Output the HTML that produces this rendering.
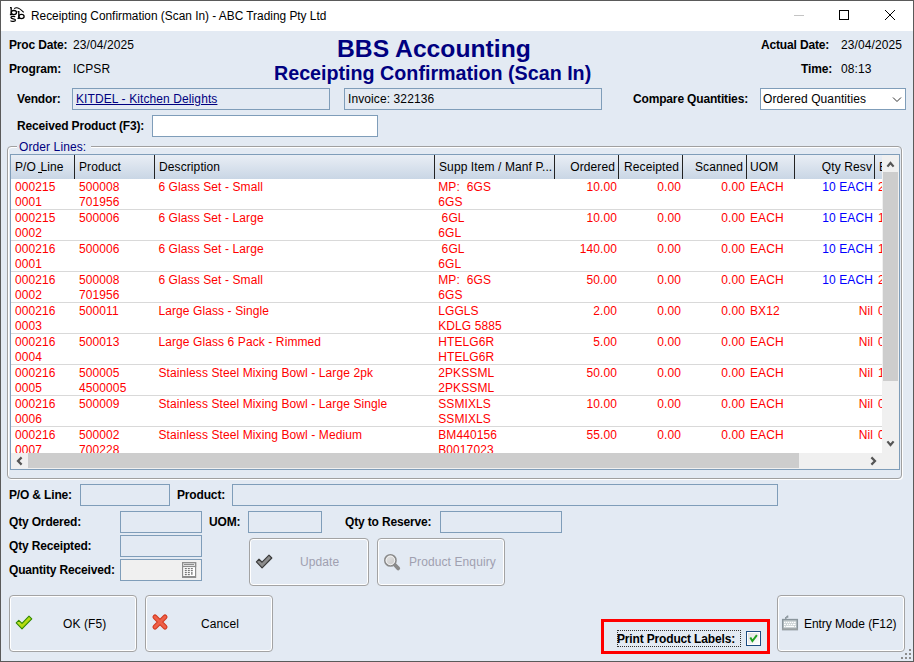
<!DOCTYPE html>
<html><head><meta charset="utf-8">
<style>
*{margin:0;padding:0;box-sizing:border-box}
html,body{width:914px;height:662px;overflow:hidden;background:#E3EAF3}
body{position:relative;font-family:"Liberation Sans",sans-serif;font-size:12px;color:#000}
.a{position:absolute;white-space:nowrap;line-height:15px}
.b{font-weight:bold;letter-spacing:-0.16px}
.r{letter-spacing:0.1px}
.box{position:absolute;border:1px solid #7F9DB9}
.btn{position:absolute;border:1px solid #A3A3A3;border-radius:4px;box-shadow:inset 0 0 0 1px #FFFFFF}
</style></head><body>

<div style="position:absolute;left:0;top:0;width:914px;height:662px;border:1px solid #5A5A5A;z-index:50"></div>
<div style="position:absolute;left:1px;top:1px;width:912px;height:30px;background:#FFFFFF"></div>
<svg style="position:absolute;left:6px;top:3px" width="24" height="24" viewBox="0 0 24 24">
 <g fill="none" stroke="#000" stroke-width="1.3">
  <path d="M4 4.7H5.4M5.2 4.2V11.6M3.9 11.5H6.2"/>
  <ellipse cx="7.9" cy="9.6" rx="2.6" ry="2.1"/>
  <path d="M11.6 8.6H13M12.8 8.1V15.5M11.5 15.4H13.8"/>
  <ellipse cx="15.5" cy="13.5" rx="2.6" ry="2.1"/>
  <path d="M8.2 5.6Q11.5 2.8 17.7 9.4" stroke-width="1.1"/>
  <path d="M9.2 14C8.6 13.1 4.9 13 4.9 14.6C4.9 16.3 9.5 15.4 9.5 17C9.5 18.7 5.4 18.8 4.5 17.6" stroke-width="1.2"/>
 </g>
</svg>
<div class="a " style="left:31px;top:9px;font-size:11.87px">Receipting Confirmation (Scan In) - ABC Trading Pty Ltd</div>
<div style="position:absolute;left:794px;top:15px;width:10px;height:1px;background:#C4C4C4"></div>
<div style="position:absolute;left:839px;top:10px;width:10px;height:10px;border:1px solid #000"></div>
<svg style="position:absolute;left:884px;top:9px" width="12" height="12" viewBox="0 0 12 12"><path d="M1 1L11 11M11 1L1 11" stroke="#000" stroke-width="1"/></svg>
<div class="a b" style="left:9px;top:38px;">Proc Date:</div>
<div class="a r" style="left:73px;top:38px;">23/04/2025</div>
<div class="a b" style="left:9px;top:62px;">Program:</div>
<div class="a r" style="left:73px;top:62px;">ICPSR</div>
<div class="a " style="left:337px;top:34px;font-size:24.7px;line-height:30px;font-weight:bold;color:#000080">BBS Accounting</div>
<div class="a " style="left:274px;top:61px;font-size:19.7px;line-height:24px;font-weight:bold;color:#000080">Receipting Confirmation (Scan In)</div>
<div class="a b" style="left:761px;top:38px;">Actual Date:</div>
<div class="a r" style="left:841px;top:38px;">23/04/2025</div>
<div class="a b" style="left:801px;top:62px;">Time:</div>
<div class="a r" style="left:841px;top:62px;">08:13</div>
<div class="a b" style="left:17px;top:92px;">Vendor:</div>
<div class="box" style="left:72px;top:88px;width:258px;height:22px;border-color:#7F9DB9;"></div>
<div class="a r" style="left:76px;top:92px;color:#000080;text-decoration:underline">KITDEL - Kitchen Delights</div>
<div class="box" style="left:344px;top:88px;width:258px;height:22px;border-color:#7F9DB9;"></div>
<div class="a r" style="left:348px;top:92px;">Invoice: 322136</div>
<div class="a b" style="left:633px;top:92px;">Compare Quantities:</div>
<div class="box" style="left:760px;top:88px;width:146px;height:22px;border-color:#7F9DB9;background:#FFFFFF;"></div>
<div class="a r" style="left:763px;top:92px;">Ordered Quantities</div>
<svg style="position:absolute;left:892px;top:96px" width="10" height="7" viewBox="0 0 10 7"><path d="M1 1.5L5 5.5L9 1.5" fill="none" stroke="#333" stroke-width="1"/></svg>
<div class="a b" style="left:17px;top:119px;">Received Product (F3):</div>
<div class="box" style="left:152px;top:115px;width:226px;height:22px;border-color:#7F9DB9;background:#FFFFFF;"></div>
<div style="position:absolute;left:7px;top:146px;width:895px;height:333px;border:1px solid #A0A0A0;border-radius:4px;box-shadow:inset 1px 1px 0 #FFF, 1px 1px 0 #FFF"></div>
<div class="a r" style="left:17px;top:140px;padding:0 5px 0 2px;background:#E3EAF3;color:#000080">Order Lines:</div>
<div style="position:absolute;left:10px;top:154px;width:890px;height:316px;border:1px solid #7F9DB9;background:#FFF;overflow:hidden">
<div style="position:absolute;left:0;top:0;width:871px;height:24px;background:linear-gradient(#E9EEF5,#C9D6E5)"></div>
<div style="position:absolute;left:63px;top:0;width:1px;height:24px;background:#222"></div>
<div style="position:absolute;left:143px;top:0;width:1px;height:24px;background:#222"></div>
<div style="position:absolute;left:423px;top:0;width:1px;height:24px;background:#222"></div>
<div style="position:absolute;left:543px;top:0;width:1px;height:24px;background:#222"></div>
<div style="position:absolute;left:607px;top:0;width:1px;height:24px;background:#222"></div>
<div style="position:absolute;left:671px;top:0;width:1px;height:24px;background:#222"></div>
<div style="position:absolute;left:735px;top:0;width:1px;height:24px;background:#222"></div>
<div style="position:absolute;left:783px;top:0;width:1px;height:24px;background:#222"></div>
<div style="position:absolute;left:863px;top:0;width:1px;height:24px;background:#222"></div>
<div class="a r" style="left:4px;top:5px">P/O <span style="margin-left:1px">Line</span></div>
<div class="a r" style="left:68px;top:5px">Product</div>
<div class="a r" style="left:148px;top:5px">Description</div>
<div class="a r" style="left:428px;top:5px">Supp Item / Manf P...</div>
<div class="a r" style="left:739px;top:5px">UOM</div>
<div class="a r" style="left:868px;top:5px">E</div>
<div class="a r" style="right:284px;top:5px">Ordered</div>
<div class="a r" style="right:220px;top:5px">Receipted</div>
<div class="a r" style="right:156px;top:5px">Scanned</div>
<div class="a r" style="right:27px;top:5px">Qty Resv</div>
<div style="position:absolute;left:27px;top:17px;width:4px;height:1px;background:#000"></div>
<div class="a r" style="left:4px;top:25px;color:#FF0000">000215</div>
<div class="a r" style="left:4px;top:40px;color:#FF0000">0001</div>
<div class="a r" style="left:68px;top:25px;color:#FF0000">500008</div>
<div class="a r" style="left:68px;top:40px;color:#FF0000">701956</div>
<div class="a r" style="left:147.4px;top:25px;color:#FF0000">6&nbsp;Glass&nbsp;Set&nbsp;-&nbsp;Small</div>
<div class="a r" style="left:427.2px;top:25px;color:#FF0000">MP:&nbsp;&nbsp;6GS</div>
<div class="a r" style="left:427.2px;top:40px;color:#FF0000">6GS</div>
<div class="a r" style="right:282px;top:25px;color:#FF0000">10.00</div>
<div class="a r" style="right:218px;top:25px;color:#FF0000">0.00</div>
<div class="a r" style="right:154px;top:25px;color:#FF0000">0.00</div>
<div class="a r" style="left:739px;top:25px;color:#FF0000">EACH</div>
<div class="a r" style="right:26px;top:25px;color:#0000FF">10 EACH</div>
<div class="a r" style="left:867px;top:25px;color:#FF0000">2</div>
<div style="position:absolute;left:0;top:54px;width:871px;height:1px;background:#D9D9D9"></div>
<div class="a r" style="left:4px;top:56px;color:#FF0000">000215</div>
<div class="a r" style="left:4px;top:71px;color:#FF0000">0002</div>
<div class="a r" style="left:68px;top:56px;color:#FF0000">500006</div>
<div class="a r" style="left:147.4px;top:56px;color:#FF0000">6&nbsp;Glass&nbsp;Set&nbsp;-&nbsp;Large</div>
<div class="a r" style="left:427.2px;top:56px;color:#FF0000">&nbsp;6GL</div>
<div class="a r" style="left:427.2px;top:71px;color:#FF0000">6GL</div>
<div class="a r" style="right:282px;top:56px;color:#FF0000">10.00</div>
<div class="a r" style="right:218px;top:56px;color:#FF0000">0.00</div>
<div class="a r" style="right:154px;top:56px;color:#FF0000">0.00</div>
<div class="a r" style="left:739px;top:56px;color:#FF0000">EACH</div>
<div class="a r" style="right:26px;top:56px;color:#0000FF">10 EACH</div>
<div class="a r" style="left:867px;top:56px;color:#FF0000">1</div>
<div style="position:absolute;left:0;top:85px;width:871px;height:1px;background:#D9D9D9"></div>
<div class="a r" style="left:4px;top:87px;color:#FF0000">000216</div>
<div class="a r" style="left:4px;top:102px;color:#FF0000">0001</div>
<div class="a r" style="left:68px;top:87px;color:#FF0000">500006</div>
<div class="a r" style="left:147.4px;top:87px;color:#FF0000">6&nbsp;Glass&nbsp;Set&nbsp;-&nbsp;Large</div>
<div class="a r" style="left:427.2px;top:87px;color:#FF0000">&nbsp;6GL</div>
<div class="a r" style="left:427.2px;top:102px;color:#FF0000">6GL</div>
<div class="a r" style="right:282px;top:87px;color:#FF0000">140.00</div>
<div class="a r" style="right:218px;top:87px;color:#FF0000">0.00</div>
<div class="a r" style="right:154px;top:87px;color:#FF0000">0.00</div>
<div class="a r" style="left:739px;top:87px;color:#FF0000">EACH</div>
<div class="a r" style="right:26px;top:87px;color:#0000FF">10 EACH</div>
<div class="a r" style="left:867px;top:87px;color:#FF0000">1</div>
<div style="position:absolute;left:0;top:116px;width:871px;height:1px;background:#D9D9D9"></div>
<div class="a r" style="left:4px;top:118px;color:#FF0000">000216</div>
<div class="a r" style="left:4px;top:133px;color:#FF0000">0002</div>
<div class="a r" style="left:68px;top:118px;color:#FF0000">500008</div>
<div class="a r" style="left:68px;top:133px;color:#FF0000">701956</div>
<div class="a r" style="left:147.4px;top:118px;color:#FF0000">6&nbsp;Glass&nbsp;Set&nbsp;-&nbsp;Small</div>
<div class="a r" style="left:427.2px;top:118px;color:#FF0000">MP:&nbsp;&nbsp;6GS</div>
<div class="a r" style="left:427.2px;top:133px;color:#FF0000">6GS</div>
<div class="a r" style="right:282px;top:118px;color:#FF0000">50.00</div>
<div class="a r" style="right:218px;top:118px;color:#FF0000">0.00</div>
<div class="a r" style="right:154px;top:118px;color:#FF0000">0.00</div>
<div class="a r" style="left:739px;top:118px;color:#FF0000">EACH</div>
<div class="a r" style="right:26px;top:118px;color:#0000FF">10 EACH</div>
<div class="a r" style="left:867px;top:118px;color:#FF0000">2</div>
<div style="position:absolute;left:0;top:147px;width:871px;height:1px;background:#D9D9D9"></div>
<div class="a r" style="left:4px;top:149px;color:#FF0000">000216</div>
<div class="a r" style="left:4px;top:164px;color:#FF0000">0003</div>
<div class="a r" style="left:68px;top:149px;color:#FF0000">500011</div>
<div class="a r" style="left:147.4px;top:149px;color:#FF0000">Large&nbsp;Glass&nbsp;-&nbsp;Single</div>
<div class="a r" style="left:427.2px;top:149px;color:#FF0000">LGGLS</div>
<div class="a r" style="left:427.2px;top:164px;color:#FF0000">KDLG&nbsp;5885</div>
<div class="a r" style="right:282px;top:149px;color:#FF0000">2.00</div>
<div class="a r" style="right:218px;top:149px;color:#FF0000">0.00</div>
<div class="a r" style="right:154px;top:149px;color:#FF0000">0.00</div>
<div class="a r" style="left:739px;top:149px;color:#FF0000">BX12</div>
<div class="a r" style="right:26px;top:149px;color:#FF0000">Nil</div>
<div class="a r" style="left:867px;top:149px;color:#FF0000">0</div>
<div style="position:absolute;left:0;top:178px;width:871px;height:1px;background:#D9D9D9"></div>
<div class="a r" style="left:4px;top:180px;color:#FF0000">000216</div>
<div class="a r" style="left:4px;top:195px;color:#FF0000">0004</div>
<div class="a r" style="left:68px;top:180px;color:#FF0000">500013</div>
<div class="a r" style="left:147.4px;top:180px;color:#FF0000">Large&nbsp;Glass&nbsp;6&nbsp;Pack&nbsp;-&nbsp;Rimmed</div>
<div class="a r" style="left:427.2px;top:180px;color:#FF0000">HTELG6R</div>
<div class="a r" style="left:427.2px;top:195px;color:#FF0000">HTELG6R</div>
<div class="a r" style="right:282px;top:180px;color:#FF0000">5.00</div>
<div class="a r" style="right:218px;top:180px;color:#FF0000">0.00</div>
<div class="a r" style="right:154px;top:180px;color:#FF0000">0.00</div>
<div class="a r" style="left:739px;top:180px;color:#FF0000">EACH</div>
<div class="a r" style="right:26px;top:180px;color:#FF0000">Nil</div>
<div class="a r" style="left:867px;top:180px;color:#FF0000">0</div>
<div style="position:absolute;left:0;top:209px;width:871px;height:1px;background:#D9D9D9"></div>
<div class="a r" style="left:4px;top:211px;color:#FF0000">000216</div>
<div class="a r" style="left:4px;top:226px;color:#FF0000">0005</div>
<div class="a r" style="left:68px;top:211px;color:#FF0000">500005</div>
<div class="a r" style="left:68px;top:226px;color:#FF0000">4500005</div>
<div class="a r" style="left:147.4px;top:211px;color:#FF0000">Stainless&nbsp;Steel&nbsp;Mixing&nbsp;Bowl&nbsp;-&nbsp;Large&nbsp;2pk</div>
<div class="a r" style="left:427.2px;top:211px;color:#FF0000">2PKSSML</div>
<div class="a r" style="left:427.2px;top:226px;color:#FF0000">2PKSSML</div>
<div class="a r" style="right:282px;top:211px;color:#FF0000">50.00</div>
<div class="a r" style="right:218px;top:211px;color:#FF0000">0.00</div>
<div class="a r" style="right:154px;top:211px;color:#FF0000">0.00</div>
<div class="a r" style="left:739px;top:211px;color:#FF0000">EACH</div>
<div class="a r" style="right:26px;top:211px;color:#FF0000">Nil</div>
<div class="a r" style="left:867px;top:211px;color:#FF0000">1</div>
<div style="position:absolute;left:0;top:240px;width:871px;height:1px;background:#D9D9D9"></div>
<div class="a r" style="left:4px;top:242px;color:#FF0000">000216</div>
<div class="a r" style="left:4px;top:257px;color:#FF0000">0006</div>
<div class="a r" style="left:68px;top:242px;color:#FF0000">500009</div>
<div class="a r" style="left:147.4px;top:242px;color:#FF0000">Stainless&nbsp;Steel&nbsp;Mixing&nbsp;Bowl&nbsp;-&nbsp;Large&nbsp;Single</div>
<div class="a r" style="left:427.2px;top:242px;color:#FF0000">SSMIXLS</div>
<div class="a r" style="left:427.2px;top:257px;color:#FF0000">SSMIXLS</div>
<div class="a r" style="right:282px;top:242px;color:#FF0000">10.00</div>
<div class="a r" style="right:218px;top:242px;color:#FF0000">0.00</div>
<div class="a r" style="right:154px;top:242px;color:#FF0000">0.00</div>
<div class="a r" style="left:739px;top:242px;color:#FF0000">EACH</div>
<div class="a r" style="right:26px;top:242px;color:#FF0000">Nil</div>
<div class="a r" style="left:867px;top:242px;color:#FF0000">0</div>
<div style="position:absolute;left:0;top:271px;width:871px;height:1px;background:#D9D9D9"></div>
<div class="a r" style="left:4px;top:273px;color:#FF0000">000216</div>
<div class="a r" style="left:4px;top:288px;color:#FF0000">0007</div>
<div class="a r" style="left:68px;top:273px;color:#FF0000">500002</div>
<div class="a r" style="left:68px;top:288px;color:#FF0000">700228</div>
<div class="a r" style="left:147.4px;top:273px;color:#FF0000">Stainless&nbsp;Steel&nbsp;Mixing&nbsp;Bowl&nbsp;-&nbsp;Medium</div>
<div class="a r" style="left:427.2px;top:273px;color:#FF0000">BM440156</div>
<div class="a r" style="left:427.2px;top:288px;color:#FF0000">B0017023</div>
<div class="a r" style="right:282px;top:273px;color:#FF0000">55.00</div>
<div class="a r" style="right:218px;top:273px;color:#FF0000">0.00</div>
<div class="a r" style="right:154px;top:273px;color:#FF0000">0.00</div>
<div class="a r" style="left:739px;top:273px;color:#FF0000">EACH</div>
<div class="a r" style="right:26px;top:273px;color:#FF0000">Nil</div>
<div class="a r" style="left:867px;top:273px;color:#FF0000">0</div>
<div style="position:absolute;left:0;top:302px;width:871px;height:1px;background:#D9D9D9"></div>
<div style="position:absolute;left:871px;top:0;width:17px;height:298px;background:#F0F0F0"></div>
<div style="position:absolute;left:872px;top:17px;width:15px;height:209px;background:#CDCDCD"></div>
<svg style="position:absolute;left:875px;top:5px" width="10" height="9" viewBox="0 0 10 9"><path d="M1.4 6.6L4.5 3L7.6 6.6" fill="none" stroke="#555" stroke-width="2.2" stroke-linejoin="miter"/></svg>
<svg style="position:absolute;left:875px;top:284px" width="10" height="9" viewBox="0 0 10 9"><path d="M1.4 2.4L4.5 6L7.6 2.4" fill="none" stroke="#555" stroke-width="2.2" stroke-linejoin="miter"/></svg>
<div style="position:absolute;left:0;top:298px;width:888px;height:16px;background:#F0F0F0"></div>
<div style="position:absolute;left:17px;top:298px;width:771px;height:15px;background:#CDCDCD"></div>
<svg style="position:absolute;left:4px;top:301px" width="9" height="10" viewBox="0 0 9 10"><path d="M6.6 1.4L3 5L6.6 8.6" fill="none" stroke="#555" stroke-width="2.2" stroke-linejoin="miter"/></svg>
<svg style="position:absolute;left:858px;top:301px" width="9" height="10" viewBox="0 0 9 10"><path d="M2.4 1.4L6 5L2.4 8.6" fill="none" stroke="#555" stroke-width="2.2" stroke-linejoin="miter"/></svg>
</div>
<div class="a b" style="left:9px;top:488px;">P/O &amp; Line:</div>
<div class="box" style="left:80px;top:484px;width:90px;height:22px;border-color:#7F9DB9;"></div>
<div class="a b" style="left:177px;top:488px;">Product:</div>
<div class="box" style="left:232px;top:484px;width:546px;height:22px;border-color:#7F9DB9;"></div>
<div class="a b" style="left:9px;top:515px;">Qty Ordered:</div>
<div class="box" style="left:120px;top:511px;width:82px;height:22px;border-color:#7F9DB9;"></div>
<div class="a b" style="left:209px;top:515px;">UOM:</div>
<div class="box" style="left:248px;top:511px;width:74px;height:22px;border-color:#7F9DB9;"></div>
<div class="a b" style="left:345px;top:515px;">Qty to Reserve:</div>
<div class="box" style="left:440px;top:511px;width:122px;height:22px;border-color:#7F9DB9;"></div>
<div class="a b" style="left:9px;top:539px;">Qty Receipted:</div>
<div class="box" style="left:120px;top:535px;width:82px;height:22px;border-color:#7F9DB9;"></div>
<div class="a b" style="left:9px;top:563px;">Quantity Received:</div>
<div class="box" style="left:120px;top:559px;width:82px;height:22px;border-color:#7F9DB9;background:#F0F0F0;"></div>
<div class="btn" style="left:249px;top:538px;width:120px;height:48px"></div>
<div class="a r" style="left:300px;top:555px;color:#A0A0B0">Update</div>
<div class="btn" style="left:377px;top:538px;width:128px;height:48px"></div>
<div class="a r" style="left:409px;top:555px;color:#A0A0B0">Product Enquiry</div>
<div class="btn" style="left:9px;top:595px;width:128px;height:57px"></div>
<div class="a r" style="left:63px;top:617px;">OK (F5)</div>
<div class="btn" style="left:145px;top:595px;width:128px;height:57px"></div>
<div class="a r" style="left:201px;top:617px;">Cancel</div>
<div class="btn" style="left:777px;top:595px;width:128px;height:57px"></div>
<div class="a " style="left:804px;top:617px;letter-spacing:-0.05px">Entry Mode (F12)</div>
<div style="position:absolute;left:601px;top:619px;width:169px;height:35px;border:3px solid #FF0000"></div>
<div style="position:absolute;left:617px;top:630px;width:124px;height:17px;border:1px dotted #333"></div>
<div class="a b" style="left:617px;top:632px;">Print Product Labels:</div>
<svg style="position:absolute;left:14px;top:612px" width="20" height="20" viewBox="0 0 20 20">
<defs><linearGradient id="gck" x1="0" y1="0" x2="1" y2="1"><stop offset="0" stop-color="#E2F56A"/><stop offset="0.5" stop-color="#B5DC12"/><stop offset="1" stop-color="#A4D400"/></linearGradient></defs>
<path d="M2.2 10.8L4.8 8.3L8 11.3L15 4.2L17.8 6.9L8 16.8Z" fill="url(#gck)" stroke="#2F8A00" stroke-width="1.1" stroke-linejoin="round"/></svg>
<svg style="position:absolute;left:150px;top:612px" width="20" height="20" viewBox="0 0 20 20">
<path d="M5 5L15 15M15 5L5 15" stroke="#D2381E" stroke-width="5" stroke-linecap="round"/>
<path d="M5 5L15 15M15 5L5 15" stroke="#EE6048" stroke-width="3" stroke-linecap="round"/></svg>
<svg style="position:absolute;left:254px;top:550px" width="22" height="22" viewBox="0 0 22 22">
<path d="M2.4 11.8L5 9.2L8.1 12.2L15 5.2L17.8 8L8.1 17.8Z" fill="#8C8C8C" stroke="#3A3A3A" stroke-width="1.2" stroke-linejoin="round"/></svg>
<svg style="position:absolute;left:380px;top:550px" width="22" height="22" viewBox="0 0 22 22">
<defs><linearGradient id="mg" x1="0" y1="0" x2="1" y2="1"><stop offset="0" stop-color="#E8E8E8"/><stop offset="1" stop-color="#C4C4C4"/></linearGradient></defs>
<path d="M15 15L18.2 18.4" stroke="#8A8A8A" stroke-width="3.8" stroke-linecap="round"/>
<circle cx="10.4" cy="10.4" r="5.6" fill="url(#mg)" stroke="#8A8A8A" stroke-width="1.6"/>
<circle cx="10.4" cy="10.4" r="4.3" fill="none" stroke="#F4F4F4" stroke-width="0.9"/></svg>
<svg style="position:absolute;left:779px;top:612px" width="22" height="22" viewBox="0 0 22 22">
<path d="M6.8 7V5M7 5H8.6V3.5" stroke="#8A959C" stroke-width="1.4" fill="none"/>
<rect x="3.7" y="7.6" width="14.6" height="10" fill="#C9D1D3" stroke="#8A959C" stroke-width="1.5"/>
<rect x="3" y="16.3" width="16" height="1.6" fill="#9AA0A2"/>
<g fill="#FFFFFF"><rect x="5" y="9.8" width="1.3" height="1.2"/><rect x="7" y="9.8" width="1.3" height="1.2"/><rect x="9" y="9.8" width="1.3" height="1.2"/><rect x="11" y="9.8" width="1.3" height="1.2"/><rect x="13" y="9.8" width="1.3" height="1.2"/><rect x="15" y="9.8" width="1.6" height="1.2"/>
<rect x="5" y="11.8" width="1.8" height="1.2"/><rect x="8" y="11.8" width="1.3" height="1.2"/><rect x="10" y="11.8" width="1.3" height="1.2"/><rect x="12" y="11.8" width="1.3" height="1.2"/><rect x="14" y="11.8" width="2.6" height="1.2"/>
<rect x="5" y="13.8" width="1.3" height="1.2"/><rect x="7" y="13.8" width="8" height="1.2"/><rect x="15.8" y="13.8" width="1.2" height="1.2"/></g></svg>
<svg style="position:absolute;left:178px;top:559px" width="22" height="22" viewBox="0 0 22 22">
<rect x="4.6" y="3.7" width="13" height="14.6" fill="#FFFFFF" stroke="#8C8C8C" stroke-width="1.2"/>
<rect x="4.6" y="3.7" width="13" height="3.8" fill="#E8E8E8" stroke="#8C8C8C" stroke-width="1.2"/>
<rect x="6" y="5" width="10" height="1" fill="#8C8C8C"/>
<rect x="4.2" y="17" width="13.8" height="1.6" fill="#8C8C8C"/>
<g fill="#777"><rect x="6.8" y="9" width="2" height="1.2"/><rect x="9.8" y="9" width="2" height="1.2"/><rect x="12.8" y="9" width="2" height="1.2"/>
<rect x="6.8" y="11" width="2" height="1.2"/><rect x="9.8" y="11" width="2" height="1.2"/><rect x="12.8" y="11" width="2" height="1.2"/>
<rect x="6.8" y="13" width="2" height="1.2"/><rect x="9.8" y="13" width="2" height="1.2"/><rect x="13.2" y="13" width="1.3" height="2.8"/>
<rect x="6.8" y="15" width="2" height="1.2"/><rect x="9.8" y="15" width="2" height="1.2"/></g></svg>
<svg style="position:absolute;left:746px;top:631px" width="15" height="15" viewBox="0 0 15 15">
<defs><linearGradient id="cbg" x1="0" y1="0" x2="1" y2="1"><stop offset="0" stop-color="#E2E2DE"/><stop offset="1" stop-color="#FFFFFF"/></linearGradient></defs>
<rect x="0.5" y="0.5" width="14" height="14" fill="#FFFFFF" stroke="#1C4C82" stroke-width="1"/>
<rect x="2" y="2" width="11" height="11" fill="url(#cbg)"/>
<path d="M4.3 6.4L6.4 10L10.9 4.1" fill="none" stroke="#21A121" stroke-width="2"/></svg>
<div style="position:absolute;left:909px;top:649px;width:2px;height:2px;background:#8C8C8C;z-index:60"></div>
<div style="position:absolute;left:905px;top:653px;width:2px;height:2px;background:#8C8C8C;z-index:60"></div>
<div style="position:absolute;left:909px;top:653px;width:2px;height:2px;background:#8C8C8C;z-index:60"></div>
<div style="position:absolute;left:901px;top:657px;width:2px;height:2px;background:#8C8C8C;z-index:60"></div>
<div style="position:absolute;left:905px;top:657px;width:2px;height:2px;background:#8C8C8C;z-index:60"></div>
<div style="position:absolute;left:909px;top:657px;width:2px;height:2px;background:#8C8C8C;z-index:60"></div>
</body></html>
